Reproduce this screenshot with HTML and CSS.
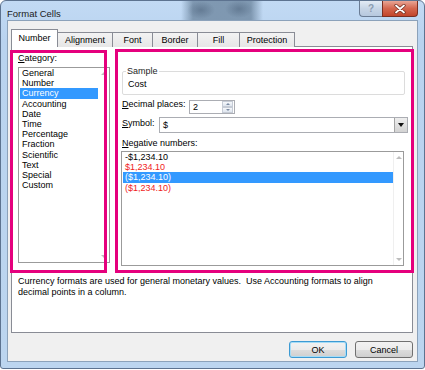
FILE: index.html
```html
<!DOCTYPE html>
<html lang="en">
<head>
    <meta charset="UTF-8">
    <title>Format Cells</title>
    <link rel="stylesheet" href="styles.css">
</head>
<body>
    <div class="window">
        <div class="titlebar">
            <span class="title">Format Cells</span>
            <div class="caption-buttons">
                <div class="cap-btn help">?</div>
                <div class="cap-btn close">
                    <svg width="12" height="10" viewBox="0 0 12 10">
                        <path d="M2 1.5 L10 8.5 M10 1.5 L2 8.5" stroke="#6b2a1c" stroke-width="3.2" stroke-linecap="round"/>
                        <path d="M2 1.5 L10 8.5 M10 1.5 L2 8.5" stroke="#ffffff" stroke-width="1.8" stroke-linecap="round"/>
                    </svg>
                </div>
            </div>
        </div>

        <div class="client">
            <div class="tabs">
                <div class="tab active" style="width: 47px">Number</div>
                <div class="tab" style="width: 55px">Alignment</div>
                <div class="tab" style="width: 40px">Font</div>
                <div class="tab" style="width: 45px">Border</div>
                <div class="tab" style="width: 42px">Fill</div>
                <div class="tab" style="width: 55px">Protection</div>
            </div>

            <div class="panel">
                <div class="panel-body">
                    <div class="col-left">
                        <div class="label"><u>C</u>ategory:</div>
                        <div class="listbox category">
                            <ul class="items">
                                <li>General</li>
                                <li>Number</li>
                                <li class="selected">Currency</li>
                                <li>Accounting</li>
                                <li>Date</li>
                                <li>Time</li>
                                <li>Percentage</li>
                                <li>Fraction</li>
                                <li>Scientific</li>
                                <li>Text</li>
                                <li>Special</li>
                                <li>Custom</li>
                            </ul>
                            <div class="vscroll">
                                <span class="arrow up"></span>
                                <span class="arrow down"></span>
                            </div>
                        </div>
                    </div>

                    <div class="col-right">
                        <fieldset class="sample">
                            <legend>Sample</legend>
                            <div class="sample-value">Cost</div>
                        </fieldset>

                        <div class="row">
                            <span class="label decimal-label"><u>D</u>ecimal places:</span>
                            <div class="spin">
                                <span class="spin-value">2</span>
                                <div class="spin-buttons">
                                    <span class="spin-btn"><span class="arrow up"></span></span>
                                    <span class="spin-btn"><span class="arrow down"></span></span>
                                </div>
                            </div>
                        </div>

                        <div class="row">
                            <span class="label symbol-label"><u>S</u>ymbol:</span>
                            <div class="combo">
                                <span class="combo-value">$</span>
                                <span class="combo-btn"><span class="arrow down dark"></span></span>
                            </div>
                        </div>

                        <div class="label neg-label"><u>N</u>egative numbers:</div>
                        <div class="listbox negative">
                            <ul class="items">
                                <li>-$1,234.10</li>
                                <li class="red">$1,234.10</li>
                                <li class="selected">($1,234.10)</li>
                                <li class="red">($1,234.10)</li>
                            </ul>
                            <div class="vscroll">
                                <span class="arrow up"></span>
                                <span class="arrow down"></span>
                            </div>
                        </div>
                    </div>
                </div>

                <p class="desc">Currency formats are used for general monetary values.&nbsp; Use Accounting formats to align decimal points in a column.</p>
            </div>

            <div class="buttons">
                <button class="btn default">OK</button>
                <button class="btn">Cancel</button>
            </div>
        </div>

        <!-- annotation boxes drawn over the dialog -->
        <div class="highlight hl-left"></div>
        <div class="highlight hl-right"></div>
    </div>
</body>
</html>
```

FILE: styles.css
```css
* {
    box-sizing: border-box;
}

body {
    margin: 0;
    background-color: #fff;
    font-family: 'Liberation Sans', Arial, sans-serif;
    font-size: 9px;
    color: #000;
}

.window {
    position: relative;
    width: 425px;
    height: 369px;
    border: 1px solid #5d7390;
    border-radius: 6px 6px 3px 3px;
    background:
        radial-gradient(ellipse 14px 9px at 200px 9px, rgba(50, 70, 95, 0.35), rgba(50, 70, 95, 0)),
        radial-gradient(ellipse 14px 9px at 238px 8px, rgba(50, 70, 95, 0.35), rgba(50, 70, 95, 0)),
        linear-gradient(90deg, rgba(120, 145, 170, 0) 180px, rgba(120, 145, 170, 0.9) 192px, rgba(120, 145, 170, 0.9) 250px, rgba(120, 145, 170, 0) 262px) 0 0 / 100% 20px no-repeat,
        linear-gradient(#c2daf4, #b9d3ef 40px, #bcd5ef);
    padding: 0 6px 6px 6px;
    display: flex;
    flex-direction: column;
}

.titlebar {
    height: 19px;
    display: flex;
    align-items: flex-start;
}

.title {
    margin-top: 7px;
    font-size: 9.5px;
    color: #1b1b1b;
}

.caption-buttons {
    margin-left: auto;
    display: flex;
}

.cap-btn {
    height: 16px;
    border: 1px solid #6a7c94;
    border-top: none;
    display: flex;
    align-items: center;
    justify-content: center;
}

.help {
    width: 23px;
    border-right: none;
    border-radius: 0 0 0 4px;
    background: linear-gradient(#e3ebf5, #c7d5e6 50%, #b6c8de);
    color: #8c9cb1;
    font-size: 10px;
    font-weight: bold;
}

.close {
    width: 36px;
    border-color: #7a2f22;
    border-radius: 0 0 4px 0;
    background: linear-gradient(#e9a595, #d4664e 50%, #c2452b);
}

.client {
    flex: 1;
    border: 1px solid #8ca2ba;
    background-color: #f0f0f0;
    padding: 8px 4px 0 3px;
    display: flex;
    flex-direction: column;
}

.tabs {
    display: flex;
    align-items: flex-end;
    height: 18px;
    margin-bottom: -1px;
    position: relative;
    z-index: 1;
}

.tab {
    height: 15px;
    border: 1px solid #898c95;
    border-left: none;
    border-bottom: none;
    background: linear-gradient(#f3f3f3, #e6e6e6);
    text-align: center;
    line-height: 14px;
}

.tab.active {
    height: 18px;
    border-left: 1px solid #898c95;
    background-color: #fff;
    background-image: none;
    line-height: 17px;
    padding-bottom: 1px;
}

.panel {
    width: 402px;
    height: 287px;
    border: 1px solid #898c95;
    background-color: #fff;
    padding: 6px 0 0 6px;
}

.panel-body {
    display: flex;
    gap: 11px;
}

.label {
    line-height: 11px;
}

.col-left {
    width: 92px;
}

.listbox {
    border: 1px solid #9b9b9b;
    background-color: #fff;
    display: flex;
}

.category {
    height: 196px;
    margin-top: 3px;
}

.items {
    list-style: none;
    margin: 0;
    padding: 0 0 0 1px;
    flex: 1;
}

.items li {
    height: 10.2px;
    line-height: 10.2px;
    padding-left: 2px;
    white-space: nowrap;
}

.items li.selected {
    background-color: #3399ff;
    color: #fff;
}

.items li.red {
    color: #f01c1c;
}

.vscroll {
    width: 11px;
    display: flex;
    flex-direction: column;
    justify-content: space-between;
    align-items: center;
    padding: 4px 0;
}

.arrow {
    width: 0;
    height: 0;
    border-left: 3px solid transparent;
    border-right: 3px solid transparent;
}

.arrow.up {
    border-bottom: 3px solid #bdbdbd;
}

.arrow.down {
    border-top: 3px solid #bdbdbd;
}

.arrow.dark {
    border-top-color: #111;
    border-left-width: 3.5px;
    border-right-width: 3.5px;
    border-top-width: 4px;
}

.col-right {
    width: 287px;
    padding-top: 13px;
}

.sample {
    margin: 0 0 0 1px;
    width: 283px;
    height: 29px;
    border: 1px solid #dcdcdc;
    border-radius: 2px;
    padding: 2px 0 0 5px;
}

.sample legend {
    padding: 0 1px;
    margin-left: -2px;
    line-height: 11px;
    color: #1e1e1e;
}

.sample-value {
    line-height: 11px;
}

.row {
    display: flex;
    align-items: center;
    padding-left: 1px;
}

.decimal-label {
    width: 67px;
}

.spin {
    margin-top: 5px;
    width: 46px;
    height: 14px;
    border: 1px solid #abadb3;
    display: flex;
    align-items: center;
}

.spin-value {
    flex: 1;
    padding-left: 3px;
}

.spin-buttons {
    width: 11px;
    height: 12px;
    display: flex;
    flex-direction: column;
    margin-right: 1px;
}

.spin-btn {
    flex: 1;
    border: 1px solid #c6ccd6;
    background: linear-gradient(#f6f8fb, #dfe6ef);
    display: flex;
    align-items: center;
    justify-content: center;
}

.spin-btn .arrow {
    border-left-width: 2px;
    border-right-width: 2px;
}

.spin-btn .arrow.up {
    border-bottom: 2px solid #7b8ba3;
}

.spin-btn .arrow.down {
    border-top: 2px solid #7b8ba3;
}

.symbol-label {
    width: 37px;
}

.combo {
    margin-top: 3px;
    width: 249px;
    height: 16px;
    border: 1px solid #abadb3;
    display: flex;
    align-items: center;
}

.combo-value {
    flex: 1;
    padding-left: 3px;
}

.combo-btn {
    width: 13px;
    height: 14px;
    border-left: 1px solid #a4a4a4;
    background: linear-gradient(#eeeeee, #d3d3d3);
    display: flex;
    align-items: center;
    justify-content: center;
}

.neg-label {
    margin-top: 5px;
    padding-left: 1px;
}

.negative {
    width: 283px;
    height: 115px;
    margin-top: 2px;
}

.negative .vscroll {
    width: 10px;
    border-left: 1px solid #efefef;
}

.desc {
    margin: 10px 0 0 0;
    width: 370px;
    line-height: 11px;
}

.buttons {
    display: flex;
    justify-content: flex-end;
    gap: 8px;
    margin-top: 8px;
}

.btn {
    width: 58px;
    height: 17px;
    padding: 0;
    font-family: 'Liberation Sans', Arial, sans-serif;
    font-size: 9px;
    color: #000;
    border: 1px solid #707070;
    border-radius: 3px;
    background: linear-gradient(#f2f2f2, #ebebeb 50%, #dddddd 51%, #cfcfcf);
}

.btn.default {
    border-color: #3c9ad3;
    box-shadow: inset 0 0 0 1px #a6dcf6;
}

.highlight {
    position: absolute;
    border: 3px solid #e5007d;
}

.hl-left {
    left: 9px;
    top: 49px;
    width: 97px;
    height: 223px;
}

.hl-right {
    left: 114px;
    top: 48px;
    width: 299px;
    height: 224px;
}
```
